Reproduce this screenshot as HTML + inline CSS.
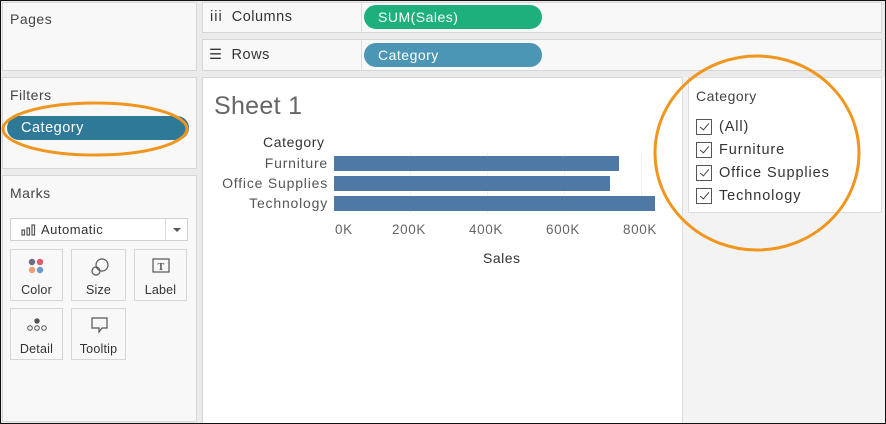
<!DOCTYPE html>
<html><head><meta charset="utf-8"><style>
*{box-sizing:border-box;margin:0;padding:0}
body{width:886px;height:424px;position:relative;background:#ebebeb;font-family:"Liberation Sans",sans-serif;overflow:hidden;color:#333;letter-spacing:0.5px}
.frame{position:absolute;left:0;top:0;width:886px;height:424px;border:1px solid #111;pointer-events:none;z-index:10}
.p{position:absolute;background:#f8f8f8;border:1px solid #d6d6d6}
.t{position:absolute;font-size:14px;color:#444}
.pill{position:absolute;border-radius:12px;color:#fff;font-size:14px;padding-left:14px;line-height:24px}
.btn{position:absolute;width:53px;height:52px;border:1px solid #d6d6d6;background:#f8f8f8;font-size:12.5px;color:#333;text-align:center;letter-spacing:0.2px}
.btn span{position:absolute;left:0;right:0;top:33px}
.lbl{position:absolute;right:0;font-size:14px;color:#555;text-align:right;letter-spacing:0.8px;white-space:nowrap}
.ax{position:absolute;top:222px;font-size:13.5px;color:#666;letter-spacing:0.6px}
.bar{position:absolute;left:334px;height:15px;background:#4e79a7}
.cb{position:absolute;left:696px;width:16px;height:16px;border:1px solid #555;background:#fff}
.cb:after{content:"";position:absolute;left:5px;top:1px;width:4px;height:8px;border:solid #444;border-width:0 1.5px 1.5px 0;transform:rotate(40deg)}
.ct{position:absolute;left:719px;font-size:14.5px;color:#333;letter-spacing:0.9px;white-space:nowrap}
</style></head><body>
<div class="p" style="left:2px;top:2px;width:195px;height:69px"></div>
<div class="t" style="left:10px;top:11px">Pages</div>
<div class="p" style="left:2px;top:77px;width:195px;height:92px"></div>
<div class="t" style="left:10px;top:87px">Filters</div>
<div class="pill" style="left:7px;top:116px;width:182px;height:24px;background:#2e7898;font-size:14.5px">Category</div>
<div class="p" style="left:2px;top:175px;width:195px;height:247px"></div>
<div class="t" style="left:10px;top:185px">Marks</div>
<div style="position:absolute;left:10px;top:218px;width:178px;height:23px;border:1px solid #d0d0d0;background:#fff"></div>
<div style="position:absolute;left:165px;top:219px;width:1px;height:21px;background:#ddd"></div>
<div style="position:absolute;left:173px;top:228px;border-left:4px solid transparent;border-right:4px solid transparent;border-top:4px solid #555"></div>
<svg style="position:absolute;left:21px;top:224px" width="16" height="12"><g fill="none" stroke="#555" stroke-width="1.2"><rect x="1" y="6" width="2.5" height="5"/><rect x="6" y="4" width="2.5" height="7"/><rect x="11" y="1" width="2.5" height="10"/></g></svg>
<div style="position:absolute;left:41px;top:222px;font-size:13px;color:#333">Automatic</div>
<div class="btn" style="left:10px;top:249px"><svg style="position:absolute;left:17px;top:8px" width="18" height="18"><circle cx="4" cy="4" r="3.2" fill="#6a6a8a"/><circle cx="12" cy="4" r="3.2" fill="#e05a6a"/><circle cx="4" cy="12" r="3.2" fill="#f0a070"/><circle cx="12" cy="12" r="3.2" fill="#6a9ad0"/></svg><span>Color</span></div>
<div class="btn" style="left:71px;top:249px;width:55px"><svg style="position:absolute;left:18px;top:7px" width="20" height="20"><g fill="none" stroke="#555" stroke-width="1.2"><circle cx="12" cy="8" r="6"/><circle cx="6" cy="14" r="4"/></g></svg><span>Size</span></div>
<div class="btn" style="left:134px;top:249px"><svg style="position:absolute;left:17px;top:8px" width="18" height="16"><rect x="1" y="1" width="16" height="13" fill="none" stroke="#555" stroke-width="1.2"/><text x="9" y="12" font-size="10" font-family="Liberation Serif" text-anchor="middle" fill="#555" font-weight="bold">T</text></svg><span>Label</span></div>
<div class="btn" style="left:10px;top:308px"><svg style="position:absolute;left:15px;top:8px" width="22" height="16"><circle cx="11" cy="4" r="2.7" fill="#555"/><g fill="none" stroke="#555" stroke-width="1"><circle cx="4" cy="11" r="2.3"/><circle cx="11" cy="11" r="2.3"/><circle cx="18" cy="11" r="2.3"/></g></svg><span>Detail</span></div>
<div class="btn" style="left:71px;top:308px;width:55px"><svg style="position:absolute;left:18px;top:7px" width="20" height="18"><path d="M2 2H17V12H12L9 16L9 12H2Z" fill="none" stroke="#555" stroke-width="1.2"/></svg><span>Tooltip</span></div>

<div class="p" style="left:202px;top:2px;width:680px;height:31px"></div>
<div style="position:absolute;left:361px;top:3px;width:1px;height:29px;background:#ddd"></div>
<div class="t" style="left:210px;top:9px;font-size:14.5px;color:#333"><b style="font-weight:normal;letter-spacing:1px">iii</b>&nbsp; Columns</div>
<div class="pill" style="left:364px;top:5px;width:178px;background:#1db07c">SUM(Sales)</div>
<div class="p" style="left:202px;top:39px;width:680px;height:32px"></div>
<div style="position:absolute;left:361px;top:40px;width:1px;height:30px;background:#ddd"></div>
<div class="t" style="left:209px;top:47px;font-size:14.5px;color:#333">☰&nbsp; Rows</div>
<div class="pill" style="left:364px;top:43px;width:178px;background:#4a96b4">Category</div>

<div style="position:absolute;left:202px;top:77px;width:480px;height:346px;background:#fff;border-left:1px solid #d6d6d6;border-top:1px solid #d6d6d6"></div>
<div style="position:absolute;left:682px;top:77px;width:203px;height:346px;background:#f3f3f3;border-left:1px solid #ddd"></div>
<div style="position:absolute;left:214px;top:92px;font-size:25px;color:#666;letter-spacing:0.3px">Sheet 1</div>
<div style="position:absolute;left:263px;top:134px;font-size:14px;color:#333;letter-spacing:0.6px">Category</div>
<div style="position:absolute;left:200px;top:0;width:128px;height:424px">
<div class="lbl" style="top:155px">Furniture</div>
<div class="lbl" style="top:175px">Office Supplies</div>
<div class="lbl" style="top:195px">Technology</div></div>
<div style="position:absolute;left:410px;top:153px;width:1px;height:60px;background:#f0f0f0"></div>
<div style="position:absolute;left:487px;top:153px;width:1px;height:60px;background:#f0f0f0"></div>
<div style="position:absolute;left:564px;top:153px;width:1px;height:60px;background:#f0f0f0"></div>
<div style="position:absolute;left:641px;top:153px;width:1px;height:60px;background:#f0f0f0"></div>
<div class="bar" style="top:156px;width:285px"></div>
<div class="bar" style="top:176px;width:276px"></div>
<div class="bar" style="top:196px;width:321px"></div>
<div class="ax" style="left:335px">0K</div>
<div class="ax" style="left:392px">200K</div>
<div class="ax" style="left:469px">400K</div>
<div class="ax" style="left:546px">600K</div>
<div class="ax" style="left:623px">800K</div>
<div style="position:absolute;left:483px;top:250px;font-size:14px;color:#333">Sales</div>

<div style="position:absolute;left:688px;top:77px;width:194px;height:136px;background:#fff;border:1px solid #ddd"></div>
<div style="position:absolute;left:696px;top:88px;font-size:14px;color:#444">Category</div>
<div class="cb" style="top:119px"></div><div class="ct" style="top:119px">(All)</div>
<div class="cb" style="top:142px"></div><div class="ct" style="top:142px">Furniture</div>
<div class="cb" style="top:165px"></div><div class="ct" style="top:165px">Office Supplies</div>
<div class="cb" style="top:188px"></div><div class="ct" style="top:188px">Technology</div>

<svg style="position:absolute;left:0;top:0" width="886" height="424">
<ellipse cx="95" cy="129" rx="92" ry="26" fill="none" stroke="#f0961e" stroke-width="3"/>
<ellipse cx="757" cy="153" rx="102" ry="97" fill="none" stroke="#f0961e" stroke-width="3"/>
</svg>
<div class="frame"></div>
</body></html>
